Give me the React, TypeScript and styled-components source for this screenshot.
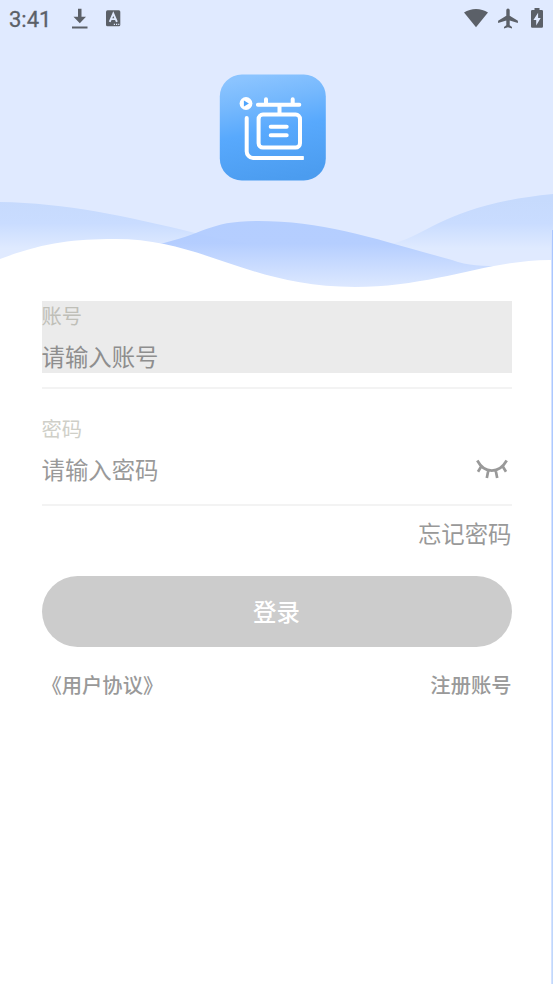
import React from 'react';
import styled, { createGlobalStyle } from 'styled-components';

const GlobalStyle = createGlobalStyle`
  * { box-sizing: border-box; }
  body { margin: 0; background: #fff; }
  button, input { font: inherit; border: 0; padding: 0; background: none; outline: none; }
`;

const Screen = styled.main`
  position: relative;
  height: 984px;
  overflow: hidden;
  background: #fff;
  font-family: 'Noto Sans CJK SC', sans-serif;
  color: #999;
`;

const EdgeGlow = styled.div`
  position: absolute;
  top: 230px;
  right: 0;
  bottom: 0;
  width: 2px;
  border-left: 1px solid #d4e2ff;
  background: linear-gradient(#a9c6ff, #b3ceff 65%, #c2d9fb);
`;

const Header = styled.header`
  position: relative;
  display: flex;
  flex-direction: column;
  align-items: center;
  height: 301px;
`;

const Waves = styled.svg`
  position: absolute;
  inset: 0;
`;

const StatusBar = styled.div`
  position: relative;
  display: flex;
  align-items: center;
  width: 100%;
  height: 38px;
  padding: 0 8px 0 9px;
  font: 400 22px/38px Roboto, sans-serif;
  color: #5b6068;
`;

const Clock = styled.span`
  width: 60px;
  padding-top: 2px;
  -webkit-text-stroke: 0.3px #5b6068;
`;

const StatusIcons = styled.svg<{ $end?: boolean }>`
  display: block;
  margin-left: ${(p) => (p.$end ? 'auto' : 0)};
`;

const Logo = styled.svg`
  position: relative;
  margin: 36px 8px 0 0;
`;

const Form = styled.form`
  display: flex;
  flex-direction: column;
  width: 470px;
  margin-left: 41.5px;
`;

const Field = styled.label<{ $active?: boolean }>`
  display: flex;
  flex-direction: column;
  height: 72px;
  background: ${(p) => (p.$active ? '#ebebeb' : 'transparent')};
`;

const Caption = styled.span<{ $active?: boolean }>`
  height: 30px;
  font-size: 20.3px;
  line-height: 29px;
  color: ${(p) => (p.$active ? '#bfbfb8' : '#cfcfc8')};
`;

const InputRow = styled.span`
  display: flex;
  align-items: center;
  height: 42px;
  padding: 8px 4px 0 0;
`;

const Input = styled.input<{ $active?: boolean }>`
  flex: 1;
  min-width: 0;
  height: 34px;
  font-size: 23.4px;
  line-height: 34px;
  &::placeholder {
    color: ${(p) => (p.$active ? '#8e8e8e' : '#999')};
    opacity: 1;
  }
`;

const Divider = styled.div<{ $before: number; $after: number }>`
  height: 2px;
  margin: ${(p) => p.$before}px 0 ${(p) => p.$after}px;
  background: #f3f3f3;
`;

const Forgot = styled.a`
  align-self: flex-end;
  height: 36px;
  font-size: 23.4px;
  line-height: 35px;
`;

const LoginButton = styled.button`
  height: 71px;
  margin-top: 24px;
  border-radius: 36px;
  background: #ccc;
  color: #fff;
  font-size: 23.4px;
  font-weight: 500;
  line-height: 71px;
`;

const Links = styled.nav`
  display: flex;
  justify-content: space-between;
  margin-top: 21px;
  font-size: 20.3px;
  font-weight: 500;
  line-height: 32px;
`;

export default function App() {
  return (
    <Screen>
      <GlobalStyle />
      <Header>
        <Waves width="553" height="301" viewBox="0 0 553 301">
          <defs>
            <linearGradient id="side" gradientUnits="userSpaceOnUse" x1="0" y1="200" x2="0" y2="255">
              <stop offset="0" stopColor="#c6dafd" />
              <stop offset=".42" stopColor="#c9dcff" />
              <stop offset=".88" stopColor="#dfeaff" />
              <stop offset="1" stopColor="#e0eaff" />
            </linearGradient>
            <linearGradient id="middle" gradientUnits="userSpaceOnUse" x1="0" y1="220" x2="0" y2="287">
              <stop offset="0" stopColor="#aecaff" />
              <stop offset=".35" stopColor="#afcaff" />
              <stop offset="1" stopColor="#dce8ff" />
            </linearGradient>
          </defs>
          <path fill="#e0eaff" d="M0 0H553V290H0Z" />
          <path
            fill="url(#side)"
            d="M0 202C66 203 126 216 195 233C260 249 345 257 395 243C431 233 450 204 553 194V290H0Z"
          />
          <path
            fill="url(#middle)"
            fillOpacity=".88"
            d="M155 245C207 234 207 221 258 221C325 221 375 239 452 260C468 266 482 266 505 266L440 290H270Z"
          />
          <path fill="#fff" d="M0 259C42 243 72 239 115 239C204 239 248 287 355 287C435 287 490 259 553 260V301H0Z" />
        </Waves>
        <StatusBar>
          <Clock>3:41</Clock>
          <StatusIcons width="56" height="38" viewBox="69 0 56 38" fill="#5b6068">
            <path d="M78 8.7h3.5v8.1H86l-6.2 6.5-6.3-6.5H78ZM72 26.6h15.5v2H72Z" />
            <rect x="106" y="10.3" width="14.3" height="16" rx="1.5" />
            <path d="m109.7 21.8 3.6-8.2 3.6 8.2m-6-2.7h4.7" fill="none" stroke="#e0eaff" strokeWidth="1.9" />
            <path d="M113.8 24.3h1.2m1 0h1.2m1 0h1.1" stroke="#e0eaff" strokeWidth="1.2" />
          </StatusIcons>
          <StatusIcons $end width="82" height="38" viewBox="463 0 82 38" fill="#5b6068">
            <path d="M464 12.5C471 7.8 481 7.8 488 12.5L476 27.2Z" />
            <path d="M506.3 10.2a1.7 1.7 0 0 1 3.4 0v5.6l8.2 5v2.2l-8.2-2.5v4.8l2.3 1.7v1.5l-4-1.2-4 1.2V27l2.3-1.7v-4.8l-8.2 2.5v-2.2l8.2-5Z" />
            <path fillRule="evenodd" d="M534.5 8h5v2h2.3q1.2 0 1.2 1.2v15.3q0 1.3-1.2 1.3h-9.6q-1.2 0-1.2-1.3V11.2q0-1.2 1.2-1.2h2.3Zm3.6 4.8-4.7 7.2h2.8v5.4l4.5-7.5h-2.6Z" />
          </StatusIcons>
        </StatusBar>
        <Logo width="107" height="107" viewBox="0 0 107 107">
          <defs>
            <linearGradient id="tile" x1=".4" y1="0" x2=".6" y2="1">
              <stop offset="0" stopColor="#8bc4ff" />
              <stop offset=".25" stopColor="#75b8fd" />
              <stop offset=".52" stopColor="#58a9fd" />
              <stop offset="1" stopColor="#4b9cef" />
            </linearGradient>
          </defs>
          <rect x=".8" y=".5" width="106" height="106" rx="22" fill="url(#tile)" />
          <g transform="translate(.7 0)">
            <g fill="none" stroke="#fff" strokeWidth="4" strokeLinecap="round" strokeLinejoin="round">
              <path d="M38.2 30.8h41.4M46.3 25.2v4.5M73 25.2v4.5M59.8 32v8" />
              <rect x="38.9" y="40.6" width="41.4" height="33" rx="4.3" />
              <path d="M51 52.7h16M51 61.3h16" />
              <path d="M27 44v33.5q0 2.5 1.8 4.3 2.2 2.3 4.5 2.3H82" />
              <path d="M80 84h4" strokeLinecap="butt" />
            </g>
            <circle cx="26.3" cy="29.5" r="6.4" fill="#fff" />
            <path d="m24.2 26.5 5 3-5 3Z" fill="#4fa5fd" />
          </g>
        </Logo>
      </Header>
      <Form onSubmit={(e) => e.preventDefault()}>
        <Field $active>
          <Caption $active>账号</Caption>
          <InputRow>
            <Input $active placeholder="请输入账号" />
          </InputRow>
        </Field>
        <Divider $before={14} $after={25} />
        <Field>
          <Caption>密码</Caption>
          <InputRow>
            <Input type="password" placeholder="请输入密码" />
            <svg width="32" height="22" viewBox="0 0 32 22" fill="none" stroke="#999" strokeWidth="2.7">
              <path d="M1.3 2.5C8.5 16 23 16 30.7 2.5M5.5 8l-3.5 5.8M12.3 12.5l-1.5 7.5M19.7 12.5l1.5 7.5M26.5 8l3.5 5.8" />
            </svg>
          </InputRow>
        </Field>
        <Divider $before={18} $after={10} />
        <Forgot>忘记密码</Forgot>
        <LoginButton type="submit">登录</LoginButton>
        <Links>
          <a>《用户协议》</a>
          <a>注册账号</a>
        </Links>
      </Form>
      <EdgeGlow />
    </Screen>
  );
}
